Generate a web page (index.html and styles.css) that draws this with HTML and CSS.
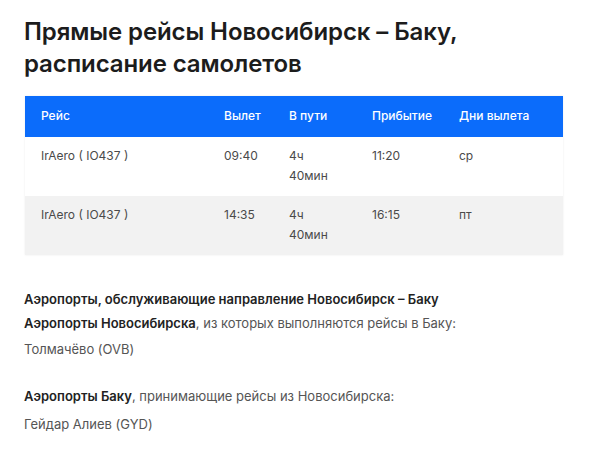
FILE: index.html
```html
<!DOCTYPE html>
<html lang="ru">
<head>
<meta charset="utf-8">
<title>Прямые рейсы Новосибирск – Баку</title>
<link rel="stylesheet" href="styles.css">
</head>
<body>
<main class="page">
  <h1 class="title">Прямые рейсы Новосибирск – Баку, расписание самолетов</h1>
  <table class="schedule">
    <colgroup>
      <col class="c-flight"><col class="c-dep"><col class="c-dur"><col class="c-arr"><col class="c-days">
    </colgroup>
    <thead>
      <tr><th>Рейс</th><th>Вылет</th><th>В пути</th><th>Прибытие</th><th>Дни вылета</th></tr>
    </thead>
    <tbody>
      <tr><td>IrAero ( IO437 )</td><td>09:40</td><td>4ч 40мин</td><td>11:20</td><td>ср</td></tr>
      <tr class="alt"><td>IrAero ( IO437 )</td><td>14:35</td><td>4ч 40мин</td><td>16:15</td><td>пт</td></tr>
    </tbody>
  </table>
  <section class="airports">
    <h2 class="airports-title">Аэропорты, обслуживающие направление Новосибирск – Баку</h2>
    <p class="lead"><b>Аэропорты Новосибирска</b>, из которых выполняются рейсы в Баку:</p>
    <p class="item">Толмачёво (OVB)</p>
    <p class="lead second"><b>Аэропорты Баку</b>, принимающие рейсы из Новосибирска:</p>
    <p class="item last">Гейдар Алиев (GYD)</p>
  </section>
</main>
</body>
</html>
```
FILE: styles.css
```css
html, body {
  margin: 0;
  padding: 0;
  background: #ffffff;
}
body {
  font-family: Inter, "Noto Sans", sans-serif;
  color: #222;
}
.page {
  padding: 16px 27px 0 24px;
}
.title {
  margin: 0 0 16px;
  font-size: 24px;
  line-height: 32px;
  font-weight: 600;
  color: #1c1c1c;
  letter-spacing: -0.1px;
}
.schedule {
  width: 538px;
  margin-left: 1px;
  border-collapse: collapse;
  table-layout: fixed;
  font-size: 12px;
  line-height: 20px;
  box-shadow: 0 0 2px rgba(0,0,0,0.08);
}
.c-flight { width: 183px; }
.c-dep { width: 65px; }
.c-dur { width: 83px; }
.c-arr { width: 87px; }
.c-days { width: 120px; }
.schedule th {
  background: #0b6cfb;
  color: #fff;
  font-weight: 500;
  text-align: left;
  padding: 10px 16px 11px;
}
.schedule td {
  color: #4a4a4a;
  vertical-align: top;
  padding: 9px 16px 10px;
}
.schedule tr.alt td {
  background: #f2f2f2;
}
.airports {
  margin-top: 34px;
  font-size: 13px;
  line-height: 20px;
  color: #555;
}
.airports-title {
  margin: 0;
  font-size: 13px;
  line-height: 20px;
  font-weight: 600;
  color: #222;
}
.airports b {
  font-weight: 600;
  color: #222;
}
.airports p {
  margin: 0;
}
.lead {
  padding-top: 4px;
}
.item {
  padding-top: 6px;
}
.lead.second {
  padding-top: 27px;
}
.item.last {
  padding-top: 8px;
}
```
